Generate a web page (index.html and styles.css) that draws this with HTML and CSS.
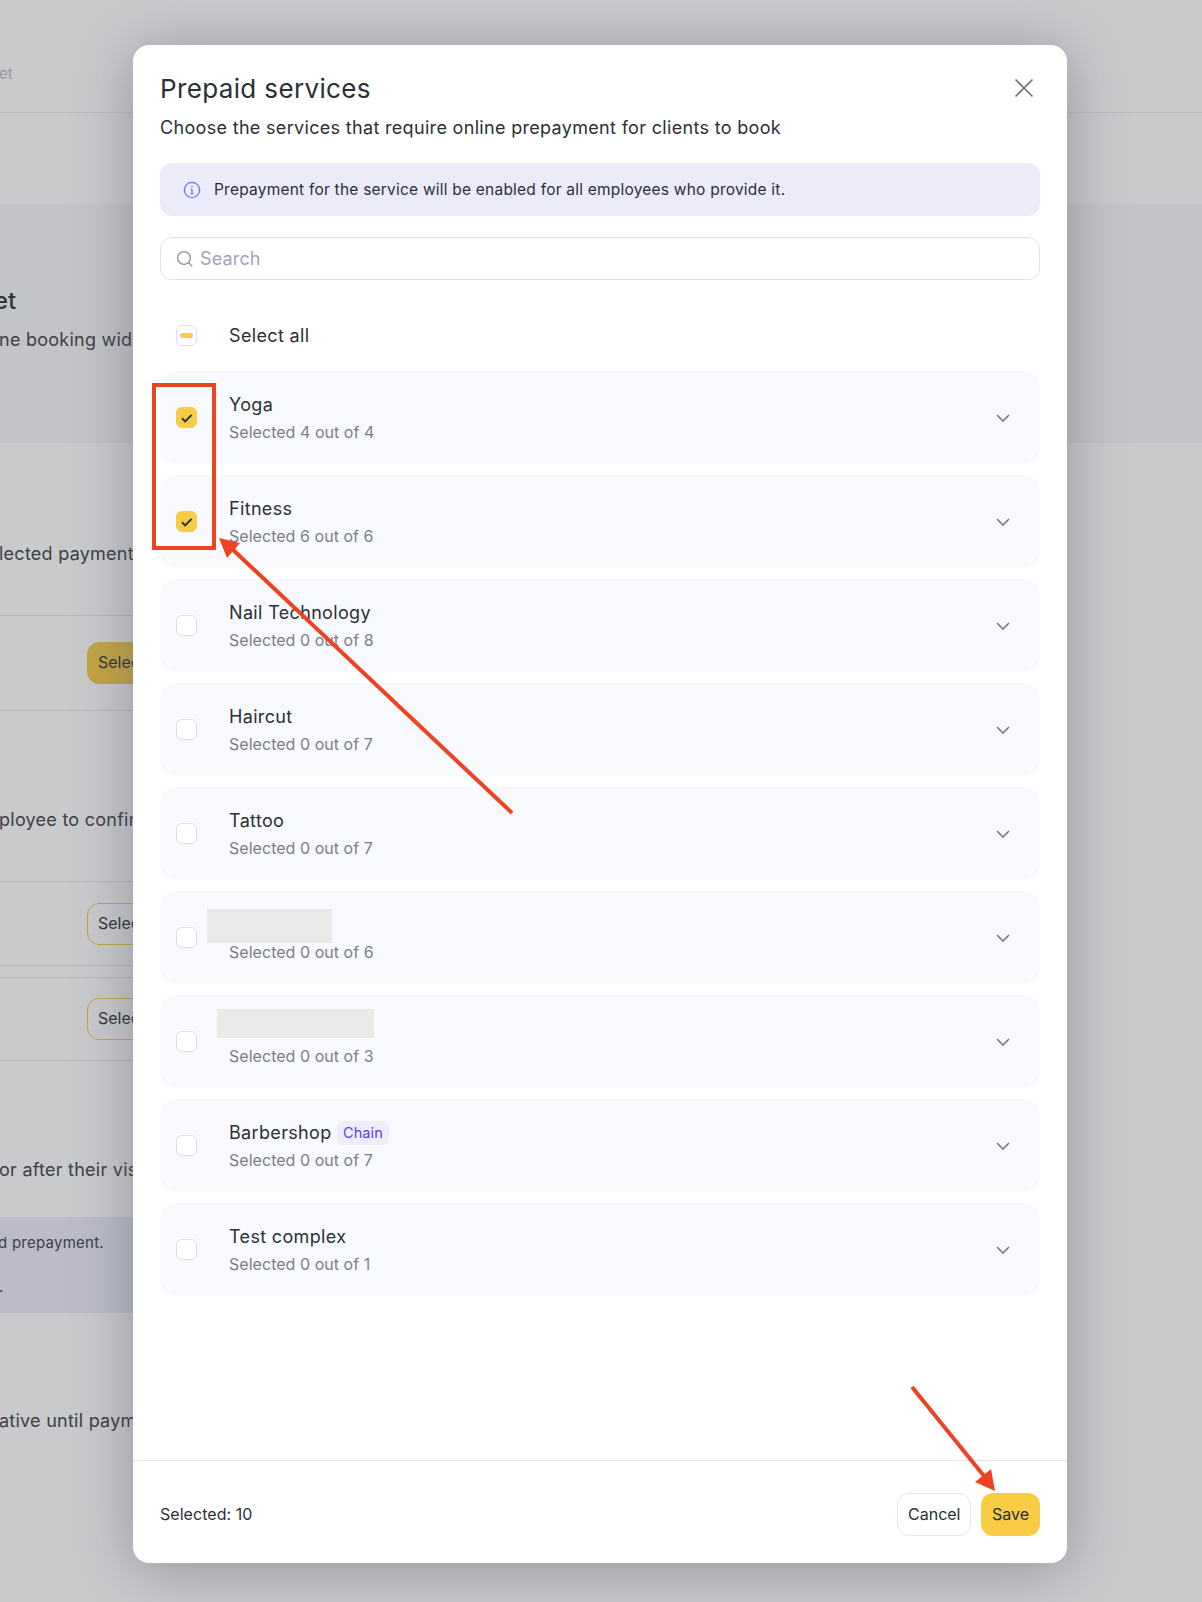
FILE: index.html
```html
<!DOCTYPE html>
<html lang="en">
<head>
<meta charset="utf-8">
<title>Prepaid services</title>
<link rel="stylesheet" href="styles.css">
</head>
<body>
<div class="page">
  <header class="topbar"><span class="crumb">et</span></header>
  <section class="band">
    <h2 class="band-title">et</h2>
    <p class="bg-text">ne booking widget</p>
  </section>
  <section class="col">
    <p class="bg-text s1">lected payment</p>
    <div class="row row-a"><span class="pick filled">Select</span></div>
    <p class="bg-text s2">ployee to confirm</p>
    <div class="row row-b"><span class="pick">Select</span></div>
    <div class="row row-c"><span class="pick">Select</span></div>
    <p class="bg-text s3">or after their visit</p>
    <div class="note">
      <p>d prepayment.</p>
      <p class="note-end">.</p>
    </div>
    <p class="bg-text s4">ative until payment</p>
  </section>

  <div class="modal">
    <div class="modal-head">
      <div class="title-row">
        <h1 class="title">Prepaid services</h1>
        <svg class="close" viewBox="0 0 20 20" width="20" height="20" fill="none"><path d="M1.5 1.5 18.5 18.5M18.5 1.5 1.5 18.5"/></svg>
      </div>
      <p class="subtitle">Choose the services that require online prepayment for clients to book</p>
      <div class="info">
        <svg class="info-icon" viewBox="0 0 18 18" width="18" height="18" fill="none"><circle cx="9" cy="9" r="7.6"/><path d="M9 8.2v4.6M7.9 8.2H9M7.8 12.8h2.4"/><circle class="dot" cx="9" cy="5.6" r=".8"/></svg>
        <span>Prepayment for the service will be enabled for all employees who provide it.</span>
      </div>
      <div class="search">
        <svg class="search-icon" viewBox="0 0 18 18" width="18" height="18" fill="none"><circle cx="8" cy="8" r="6.4"/><path d="m12.8 12.8 3.4 3.6"/></svg>
        <span>Search</span>
      </div>
    </div>
    <div class="modal-body">
      <div class="select-all">
        <span class="box"><i class="dash"></i></span>
        <span class="name">Select all</span>
      </div>
      <div class="cards">
        <div class="card">
          <span class="box on"><svg viewBox="0 0 21 21" width="21" height="21" fill="none"><path d="M6 11.3 9.2 14.4 15.6 7.9"/></svg></span>
          <div class="card-text"><div class="name">Yoga</div><div class="sub">Selected 4 out of 4</div></div>
          <svg class="chev" viewBox="0 0 14 8" width="14" height="8" fill="none"><path d="m1 1 6 6 6-6"/></svg>
        </div>
        <div class="card">
          <span class="box on"><svg viewBox="0 0 21 21" width="21" height="21" fill="none"><path d="M6 11.3 9.2 14.4 15.6 7.9"/></svg></span>
          <div class="card-text"><div class="name">Fitness</div><div class="sub">Selected 6 out of 6</div></div>
          <svg class="chev" viewBox="0 0 14 8" width="14" height="8" fill="none"><path d="m1 1 6 6 6-6"/></svg>
        </div>
        <div class="card">
          <span class="box"></span>
          <div class="card-text"><div class="name">Nail Technology</div><div class="sub">Selected 0 out of 8</div></div>
          <svg class="chev" viewBox="0 0 14 8" width="14" height="8" fill="none"><path d="m1 1 6 6 6-6"/></svg>
        </div>
        <div class="card">
          <span class="box"></span>
          <div class="card-text"><div class="name">Haircut</div><div class="sub">Selected 0 out of 7</div></div>
          <svg class="chev" viewBox="0 0 14 8" width="14" height="8" fill="none"><path d="m1 1 6 6 6-6"/></svg>
        </div>
        <div class="card">
          <span class="box"></span>
          <div class="card-text"><div class="name">Tattoo</div><div class="sub">Selected 0 out of 7</div></div>
          <svg class="chev" viewBox="0 0 14 8" width="14" height="8" fill="none"><path d="m1 1 6 6 6-6"/></svg>
        </div>
        <div class="card">
          <span class="box"></span>
          <div class="mask mask-a"></div>
          <div class="card-text"><div class="name">&nbsp;</div><div class="sub">Selected 0 out of 6</div></div>
          <svg class="chev" viewBox="0 0 14 8" width="14" height="8" fill="none"><path d="m1 1 6 6 6-6"/></svg>
        </div>
        <div class="card">
          <span class="box"></span>
          <div class="mask mask-b"></div>
          <div class="card-text"><div class="name">&nbsp;</div><div class="sub">Selected 0 out of 3</div></div>
          <svg class="chev" viewBox="0 0 14 8" width="14" height="8" fill="none"><path d="m1 1 6 6 6-6"/></svg>
        </div>
        <div class="card">
          <span class="box"></span>
          <div class="card-text"><div class="name">Barbershop <span class="tag">Chain</span></div><div class="sub">Selected 0 out of 7</div></div>
          <svg class="chev" viewBox="0 0 14 8" width="14" height="8" fill="none"><path d="m1 1 6 6 6-6"/></svg>
        </div>
        <div class="card">
          <span class="box"></span>
          <div class="card-text"><div class="name">Test complex</div><div class="sub">Selected 0 out of 1</div></div>
          <svg class="chev" viewBox="0 0 14 8" width="14" height="8" fill="none"><path d="m1 1 6 6 6-6"/></svg>
        </div>
      </div>
    </div>
    <div class="modal-foot">
      <span class="count">Selected: 10</span>
      <div class="actions">
        <span class="btn ghost">Cancel</span>
        <span class="btn save">Save</span>
      </div>
    </div>
  </div>

  <svg class="marks" viewBox="0 0 1202 1602" width="1202" height="1602" fill="none">
    <rect class="mark-line" x="154" y="385" width="60" height="163"/>
    <path class="mark-line" d="M512 813 229 546"/>
    <path class="mark-fill" d="M219 538 240 543 227 558Z"/>
    <path class="mark-line" d="M912 1387 984 1476"/>
    <path class="mark-fill" d="M995 1491 975 1482 991 1469Z"/>
  </svg>
</div>
</body>
</html>
```
FILE: styles.css
```css
* { box-sizing: border-box; }
html, body { margin: 0; padding: 0; }
body { font-family: Inter, "Liberation Sans", sans-serif; color: #2c3036; }
p, h1, h2 { margin: 0; font-weight: 400; }

.page {
  position: relative;
  width: 1202px;
  height: 1602px;
  overflow: hidden;
  background: #c9cacc;
  color: #3d4046;
}

.topbar {
  height: 113px;
  padding-top: 64px;
  border-bottom: 1px solid #bcbdc1;
  font-size: 15px;
  line-height: 20px;
  color: #96989c;
  margin-bottom: 91px;
}
.crumb { display: block; margin-left: -1px; }

.band {
  height: 239px;
  padding-top: 83px;
  background: #c3c4c7;
}
.band-title { font-size: 24px; line-height: 28px; font-weight: 500; color: #33363b; margin-left: -6px; }
.bg-text { font-size: 18px; line-height: 26px; white-space: nowrap; margin-left: -1px; letter-spacing: .25px; }
.band .bg-text { margin-top: 12px; }

.col { width: 700px; }
.s1 { margin-top: 98px; margin-bottom: 48px; }
.s2 { margin-top: 96px; margin-bottom: 48px; }
.s3 { margin-top: 96px; margin-bottom: 34px; }
.s4 { margin-top: 95px; }

.row { display: flex; align-items: center; border-bottom: 1px solid #b5b6bd; padding-left: 87px; }
.row-a { height: 96px; border-top: 1px solid #b5b6bd; }
.row-b { height: 85px; border-top: 1px solid #b5b6bd; margin-bottom: 11px; }
.row-c { height: 84px; border-top: 1px solid #b5b6bd; }

.pick {
  width: 140px;
  height: 42px;
  padding-left: 10px;
  border: 1px solid #c4a544;
  border-radius: 12px;
  font-size: 16px;
  line-height: 38px;
  color: #33363b;
}
.pick.filled { background: #c4a544; }

.note {
  height: 96px;
  padding-top: 16px;
  background: #bcbcc9;
  font-size: 15px;
  line-height: 20px;
  letter-spacing: .25px;
}
.note-end { margin-top: 24px; margin-left: -1px; }
.note p:first-child { margin-left: -2px; }

.modal {
  position: absolute;
  left: 133px;
  top: 45px;
  width: 934px;
  height: 1518px;
  display: flex;
  flex-direction: column;
  background: #fff;
  border-radius: 16px;
  color: #2c3036;
  box-shadow: 0 6px 60px rgba(70, 74, 92, .42);
}
.modal-head { padding: 26px 27px 0; }
.title-row { display: flex; justify-content: space-between; align-items: center; height: 36px; }
.title { font-size: 26px; line-height: 36px; font-weight: 430; letter-spacing: .36px; }
.close { stroke: #6d717c; stroke-width: 1.7; margin-right: 6px; margin-top: -2px; }
.subtitle { margin-top: 8px; font-size: 18px; line-height: 26px; letter-spacing: .32px; }

.info {
  display: flex;
  align-items: center;
  gap: 13px;
  height: 53px;
  margin-top: 22px;
  padding-left: 23px;
  background: #ecebfa;
  border-radius: 12px;
  font-size: 15.5px;
  letter-spacing: .22px;
}
.info-icon { stroke: #7b74f0; stroke-width: 1.35; }
.info-icon .dot { fill: #7b74f0; stroke: none; }

.search {
  display: flex;
  align-items: center;
  gap: 6px;
  height: 43px;
  margin-top: 21px;
  padding-left: 15px;
  border: 1px solid #dfe1ea;
  border-radius: 12px;
  font-size: 18px;
  letter-spacing: .15px;
  color: #9fa4b4;
}
.search-icon { stroke: #8d92a0; stroke-width: 1.3; }

.modal-body { flex: 1; padding: 20px 27px 0; }
.select-all { display: flex; align-items: center; gap: 32px; height: 71px; padding-left: 16px; }
.name { font-size: 18px; line-height: 27px; font-weight: 420; letter-spacing: .34px; color: #2c3036; }

.box {
  flex: none;
  display: block;
  width: 21px;
  height: 21px;
  background: #fff;
  border: 1px solid #dcdee8;
  border-radius: 6px;
}
.dash { display: block; width: 13px; height: 5px; margin: 7px 0 0 3px; background: #f8cc45; border-radius: 3px; }
.box.on { background: #f8cc45; border-color: #f8cc45; margin: 0; }
.box.on svg { display: block; margin: -1px; stroke: #2c3036; stroke-width: 2; }

.cards { display: flex; flex-direction: column; gap: 11px; }
.card {
  position: relative;
  display: flex;
  align-items: center;
  height: 93px;
  padding: 0 30px 0 16px;
  background: #f8f9fc;
  border-radius: 16px;
}
.card-text { flex: 1; margin-left: 32px; padding-top: 2px; }
.sub { margin-top: 1px; font-size: 16px; line-height: 27px; color: #7a7e89; letter-spacing: .04px; }
.tag {
  display: inline-block;
  margin-left: 0;
  padding: 0 6px;
  height: 24px;
  background: #eeedfb;
  border-radius: 6px;
  font-size: 14.5px;
  font-weight: 400;
  letter-spacing: .1px;
  line-height: 24px;
  color: #5b3df5;
  vertical-align: 1px;
}
.chev { flex: none; stroke: #6d717c; stroke-width: 1.5; }
.mask { position: absolute; background: #e9e9e9; }
.mask-a { left: 47px; top: 18px; width: 125px; height: 34px; }
.mask-b { left: 57px; top: 14px; width: 157px; height: 29px; }

.modal-foot {
  display: flex;
  align-items: center;
  justify-content: space-between;
  height: 103px;
  padding: 5px 27px 0;
  border-top: 1px solid #e2e4ec;
}
.count { font-size: 16px; letter-spacing: .05px; margin-top: -2px; }
.actions { display: flex; gap: 10px; }
.btn {
  height: 43px;
  padding: 0 10px;
  border-radius: 12px;
  font-size: 16px;
  line-height: 41px;
  font-weight: 500;
  border: 1px solid transparent;
}
.btn.ghost { width: 74px; text-align: center; border-color: #e2e4ec; font-weight: 400; }
.btn.save { width: 59px; text-align: center; background: #f8cc45; font-weight: 400; }

.marks { position: absolute; left: 0; top: 0; }
.mark-line { stroke: #ee4323; stroke-width: 4; }
.mark-fill { fill: #ee4323; }
```
